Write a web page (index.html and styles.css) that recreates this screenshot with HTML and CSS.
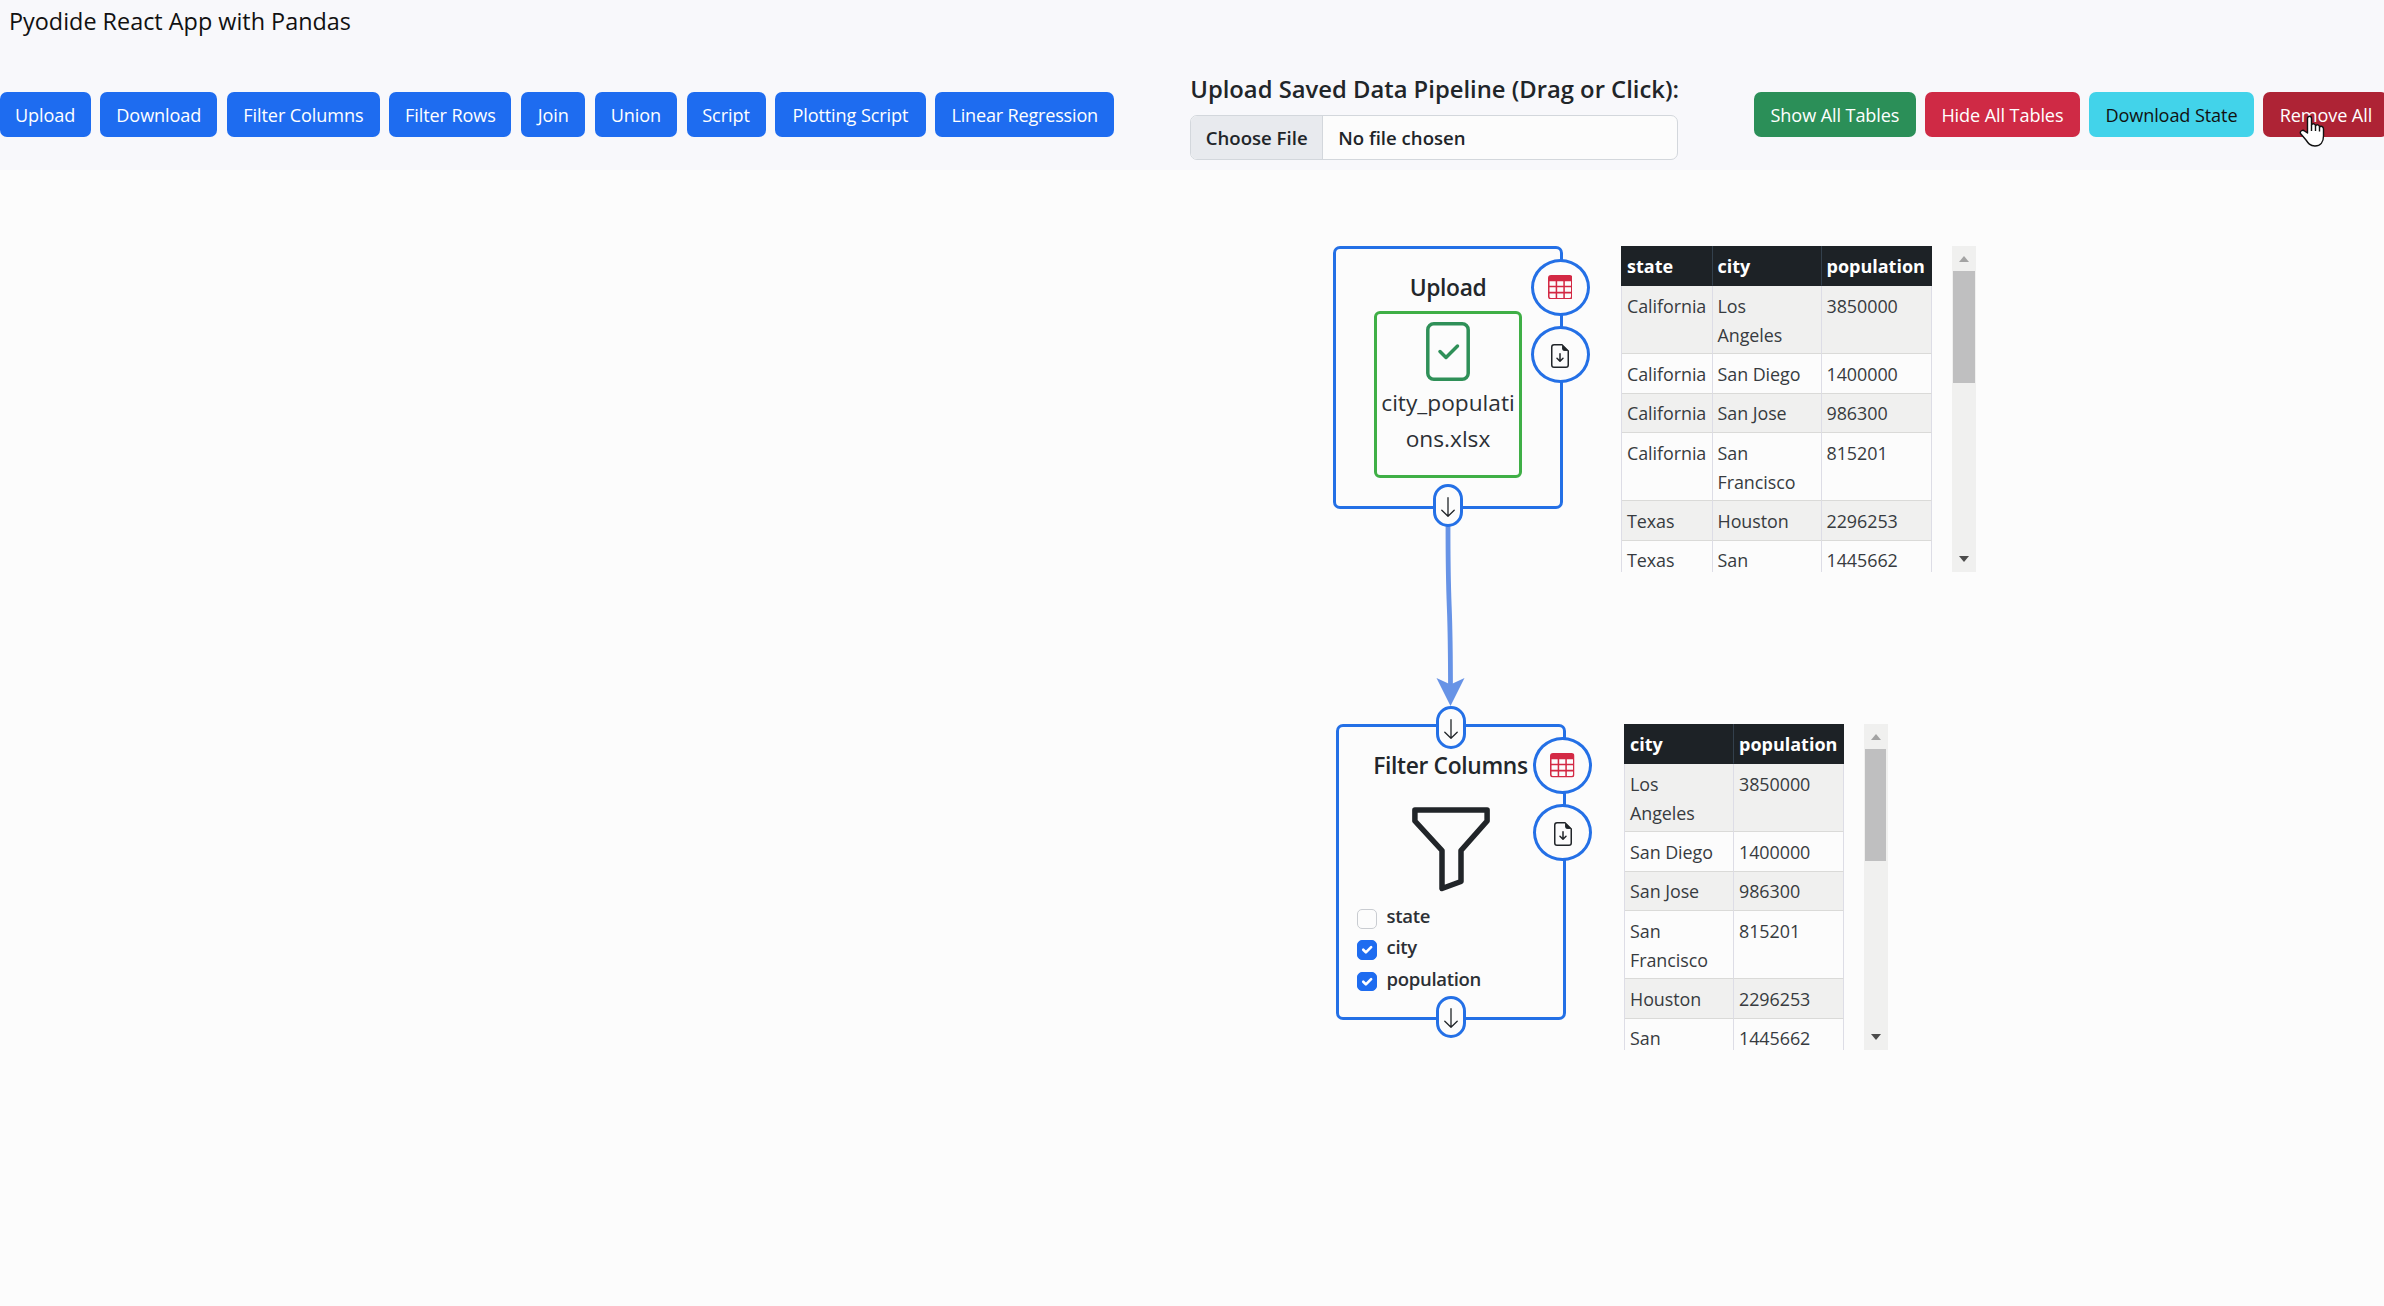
FILE: index.html
```html
<!DOCTYPE html>
<html lang="en">
<head>
<meta charset="utf-8">
<title>Pyodide React App with Pandas</title>
<link rel="stylesheet" href="styles.css">
</head>
<body>
<svg width="0" height="0" class="defs">
  <symbol id="table" viewBox="0 0 16 16"><path fill="currentColor" d="M0 2a2 2 0 0 1 2-2h12a2 2 0 0 1 2 2v12a2 2 0 0 1-2 2H2a2 2 0 0 1-2-2zm15 2h-4v3h4zm0 4h-4v3h4zm0 4h-4v3h3a1 1 0 0 0 1-1zm-5 3v-3H6v3zm-5 0v-3H1v2a1 1 0 0 0 1 1zm-4-4h4V8H1zm0-4h4V4H1zm5-3v3h4V4zm4 4H6v3h4z"/></symbol>
  <symbol id="file-down" viewBox="0 0 16 16"><path fill="currentColor" d="M8.500 6.500a.5.5 0 0 0-1 0v3.793L6.354 9.146a.5.5 0 1 0-.708.708l2 2a.5.5 0 0 0 .708 0l2-2a.5.5 0 0 0-.708-.708L8.500 10.293z"/><path fill="currentColor" d="M14 14V4.500L9.500 0H4a2 2 0 0 0-2 2v12a2 2 0 0 0 2 2h8a2 2 0 0 0 2-2M9.500 3A1.500 1.500 0 0 0 11 4.500h2V14a1 1 0 0 1-1 1H4a1 1 0 0 1-1-1V2a1 1 0 0 1 1-1h5.500z"/><path fill="currentColor" d="M9.500 0.500V3A1.500 1.500 0 0 0 11 4.500H13.700z"/></symbol>
  <symbol id="arrow" viewBox="0 0 14 20"><path fill="none" stroke="currentColor" stroke-width="1.300" stroke-linecap="round" stroke-linejoin="round" d="M7 .7V19M.8 13.300 7 19.300l6.200-6"/></symbol>
</svg>

<header class="header">
  <h1 class="title">Pyodide React App with Pandas</h1>
  <div class="toolbar">
    <div class="group">
      <button class="btn w-upload">Upload</button>
      <button class="btn w-download">Download</button>
      <button class="btn w-cols">Filter Columns</button>
      <button class="btn w-rows">Filter Rows</button>
      <button class="btn w-join">Join</button>
      <button class="btn w-union">Union</button>
      <button class="btn w-script">Script</button>
      <button class="btn w-plot">Plotting Script</button>
      <button class="btn w-linear">Linear Regression</button>
    </div>
    <div class="saved">
      <div class="saved-label">Upload Saved Data Pipeline (Drag or Click):</div>
      <div class="file"><span class="file-button">Choose File</span><span class="file-name">No file chosen</span></div>
    </div>
    <div class="group">
      <button class="btn green w-show">Show All Tables</button>
      <button class="btn red w-hide">Hide All Tables</button>
      <button class="btn cyan w-state">Download State</button>
      <button class="btn dark-red w-remove">Remove All</button>
    </div>
  </div>
</header>

<main class="canvas">
  <svg class="edge" width="40" height="190" viewBox="0 0 40 190">
    <path d="M18 0C18 100 20.500 60 20.500 165" fill="none" stroke="#6793e6" stroke-width="4.800"/>
    <path d="M6.500 152 20.500 158.500 34.500 152 20.500 180z" fill="#6793e6"/>
  </svg>

  <section class="node upload">
    <h2 class="node-title">Upload</h2>
    <div class="drop">
      <svg class="check" width="44" height="59" viewBox="0 0 44 59"><rect x="1.800" y="1.800" width="40.400" height="55.400" rx="6" /><path d="M14 29.500l6 6L31.500 24"/></svg>
      <div class="filename">city_populati<br>ons.xlsx</div>
    </div>
    <span class="round first"><svg width="24.500" height="24.500" class="red-icon"><use href="#table"/></svg></span>
    <span class="round second"><svg width="24" height="24"><use href="#file-down"/></svg></span>
    <span class="pill bottom"><svg width="14" height="20"><use href="#arrow"/></svg></span>
  </section>

  <section class="node filter">
    <h2 class="node-title">Filter Columns</h2>
    <svg class="funnel" width="78" height="85" viewBox="0 0 78 85"><path d="M2.900 2.900H75.100V14L49 43.500V74.500L30 81.500V43.500L2.900 14z"/></svg>
    <div class="checks">
      <label class="check-row"><span class="box"></span>state</label>
      <label class="check-row"><span class="box on"><svg viewBox="0 0 20 20"><path d="M6 10l3 3 6-6"/></svg></span>city</label>
      <label class="check-row"><span class="box on"><svg viewBox="0 0 20 20"><path d="M6 10l3 3 6-6"/></svg></span>population</label>
    </div>
    <span class="round first"><svg width="24.500" height="24.500" class="red-icon"><use href="#table"/></svg></span>
    <span class="round second"><svg width="24" height="24"><use href="#file-down"/></svg></span>
    <span class="pill top"><svg width="14" height="20"><use href="#arrow"/></svg></span>
    <span class="pill bottom"><svg width="14" height="20"><use href="#arrow"/></svg></span>
  </section>

  <div class="preview three">
    <div class="grid">
      <div class="row head"><b>state</b><b>city</b><b>population</b></div>
      <div class="row"><span>California</span><span>Los<br>Angeles</span><span>3850000</span></div>
      <div class="row"><span>California</span><span>San Diego</span><span>1400000</span></div>
      <div class="row"><span>California</span><span>San Jose</span><span>986300</span></div>
      <div class="row"><span>California</span><span>San<br>Francisco</span><span>815201</span></div>
      <div class="row"><span>Texas</span><span>Houston</span><span>2296253</span></div>
      <div class="row"><span>Texas</span><span>San</span><span>1445662</span></div>
    </div>
    <div class="scroll"><i class="up"></i><i class="thumb"></i><i class="down"></i></div>
  </div>

  <div class="preview two">
    <div class="grid">
      <div class="row head"><b>city</b><b>population</b></div>
      <div class="row"><span>Los<br>Angeles</span><span>3850000</span></div>
      <div class="row"><span>San Diego</span><span>1400000</span></div>
      <div class="row"><span>San Jose</span><span>986300</span></div>
      <div class="row"><span>San<br>Francisco</span><span>815201</span></div>
      <div class="row"><span>Houston</span><span>2296253</span></div>
      <div class="row"><span>San</span><span>1445662</span></div>
    </div>
    <div class="scroll"><i class="up"></i><i class="thumb"></i><i class="down"></i></div>
  </div>
</main>

<svg class="cursor" width="26" height="33" viewBox="0 0 26 33"><path d="M8.500 18V3.500C8.500.500 12.500.500 12.500 3.500V10C13.500 8 16.500 8.500 16.500 11 17.500 9 20.500 9.500 20.500 12 22 10.500 24.500 11.500 24.500 14V21C24.500 27 21.500 31 16 31 11 31 9 28 7 25L1.500 18.500C.500 16 4 14.500 5.500 16z"/><path d="M12.500 10v6M16.500 11v5M20.500 12v4.500"/></svg>
</body>
</html>
```
FILE: styles.css
```css
* { box-sizing: border-box; }
body {
  margin: 0;
  width: 2384px;
  height: 1306px;
  position: relative;
  overflow: hidden;
  background: #fcfcfc;
  color: #212529;
  font-family: "Open Sans", "Noto Sans", sans-serif;
  font-size: 18px;
}
.defs { position: absolute; }

.header { height: 170px; background: #f8f8fb; }
.title { margin: 0; padding: 3px 0 0 9px; height: 72px; font-size: 23.4px; line-height: 36px; font-weight: 400; color: #111; }
.toolbar { display: flex; align-items: flex-start; }
.group { display: flex; gap: 9.6px; padding-top: 20px; }
.btn {
  flex: none;
  height: 45px;
  padding: 0;
  border: 0;
  border-radius: 7px;
  background: #1e6cf0;
  color: #fff;
  font: 400 18.1px/46px "Open Sans", sans-serif;
  letter-spacing: -0.1px;
  white-space: nowrap;
}
.w-upload { width: 91px; margin-left: -0.5px; }
.w-download { width: 117.4px; }
.w-cols { width: 152.7px; }
.w-rows { width: 122px; }
.w-join { width: 64.4px; }
.w-union { width: 82px; }
.w-script { width: 79px; }
.w-plot { width: 150.5px; }
.w-linear { width: 179px; letter-spacing: -0.2px; }
.w-show { width: 161.5px; }
.w-hide { width: 154.2px; }
.w-state { width: 164.7px; }
.w-remove { width: 125px; }
.green { background: #2b8f58; }
.red { background: #cf2a45; }
.cyan { background: #42d3ea; color: #111; }
.dark-red { background: #ae2335; }

.saved { width: 488px; margin: 0 76px 0 76px; }
.saved-label { margin-top: -1.5px; height: 44.5px; font-size: 23.8px; line-height: 36px; font-weight: 600; white-space: nowrap; }
.file { display: flex; height: 45px; border: 1px solid #d3d7dc; border-radius: 7px; background: #fcfcfc; overflow: hidden; font-size: 18.6px; font-weight: 600; line-height: 43px; }
.file-button { width: 132px; padding-left: 14.5px; background: #e8eaee; border-right: 1px solid #d3d7dc; }
.file-name { padding-left: 15px; }

.edge { position: absolute; left: 1430px; top: 526px; }
.node { position: absolute; border: 3px solid #2470e6; border-radius: 7px; }
.upload { left: 1333px; top: 245.5px; width: 230px; height: 263px; }
.filter { left: 1335.5px; top: 724px; width: 230px; height: 296px; }
.node-title { margin: 21px 0 0; text-align: center; font-size: 22.8px; line-height: 36px; font-weight: 600; letter-spacing: -0.35px; white-space: nowrap; color: #23272b; }
.drop { display: flex; flex-direction: column; align-items: center; width: 148px; height: 167px; margin: 5px auto 0 38px; padding-top: 8px; border: 3px solid #3faf46; border-radius: 6px; }
.check { flex: none; fill: none; stroke: #2f9058; stroke-width: 3.5; stroke-linecap: round; stroke-linejoin: round; }
.filename { margin-top: 4px; font-size: 22.7px; line-height: 36px; text-align: center; white-space: nowrap; color: #2c3035; }
.round { position: absolute; left: 194.5px; display: grid; place-items: center; width: 59px; height: 57px; border: 3px solid #2470e6; border-radius: 50%; background: #fcfcfc; }
.round svg { display: block; }
.first { top: 10px; }
.second { top: 77px; }
.second svg { margin-top: 3px; }
.red-icon { color: #d32944; }
.pill { position: absolute; left: 97px; display: grid; place-items: center; width: 30px; height: 42.5px; padding-top: 3px; border: 3px solid #2470e6; border-radius: 15px; background: #fcfcfc; }
.pill.top { top: -21px; }
.pill.bottom { bottom: -21px; }
.funnel { display: block; margin: 23px auto 0; fill: none; stroke: #212529; stroke-width: 5.5; stroke-linejoin: round; }
.checks { padding: 9px 0 0 18.5px; }
.check-row { display: flex; gap: 10px; height: 31.3px; font-size: 18.5px; line-height: 30px; font-weight: 600; letter-spacing: -0.3px; color: #2c3035; }
.box { width: 19.5px; height: 19.5px; margin-top: 8px; border: 1px solid #c9ccd1; border-radius: 5px; }
.box.on { border-color: #1e6cf0; background: #1e6cf0; }
.box svg { display: block; width: 17.5px; height: 17.5px; fill: none; stroke: #fff; stroke-width: 3; stroke-linecap: round; stroke-linejoin: round; }

.preview { position: absolute; display: flex; height: 326px; overflow: hidden; }
.three { left: 1621px; top: 246px; gap: 20px; }
.two { left: 1624px; top: 724px; gap: 20px; }
.row { display: grid; grid-template-columns: 109px 110px; border-left: 1px solid #dddde6; }
.three .row { grid-template-columns: 90.5px 109px 110.5px; }
.two .grid { width: 220px; }
.row > * { padding: 5.8px 0 3.8px 5px; line-height: 28.8px; border-right: 1px solid #dddde6; border-bottom: 1px solid #dadad8; white-space: nowrap; }
.row > span { font-size: 17.9px; letter-spacing: -0.05px; color: #373b40; }
.row:nth-child(even) > span { background: #f0f0ef; }
.row.head { border-left-color: #1d2226; }
.row.head b { height: 40px; font-size: 18px; background: #1d2226; color: #fff; border-color: #1d2226; }
.row.head b:not(:last-child) { border-right-color: #33404c; }
.scroll { display: flex; flex-direction: column; align-items: center; width: 24px; height: 326px; background: #f0f0ef; }
.two .scroll { margin-left: -0.5px; }
.up { margin-top: 10px; border: 5px solid transparent; border-top: 0; border-bottom: 6px solid #a3a3a3; }
.thumb { width: 21.5px; height: 112px; margin-top: 9px; background: #bfbfc0; }
.down { margin: auto 0 10px; border: 5px solid transparent; border-bottom: 0; border-top: 6px solid #4c4c4c; }

.cursor { position: absolute; left: 2299px; top: 115px; fill: #fff; stroke: #111; stroke-width: 1.4; stroke-linejoin: round; }
```
